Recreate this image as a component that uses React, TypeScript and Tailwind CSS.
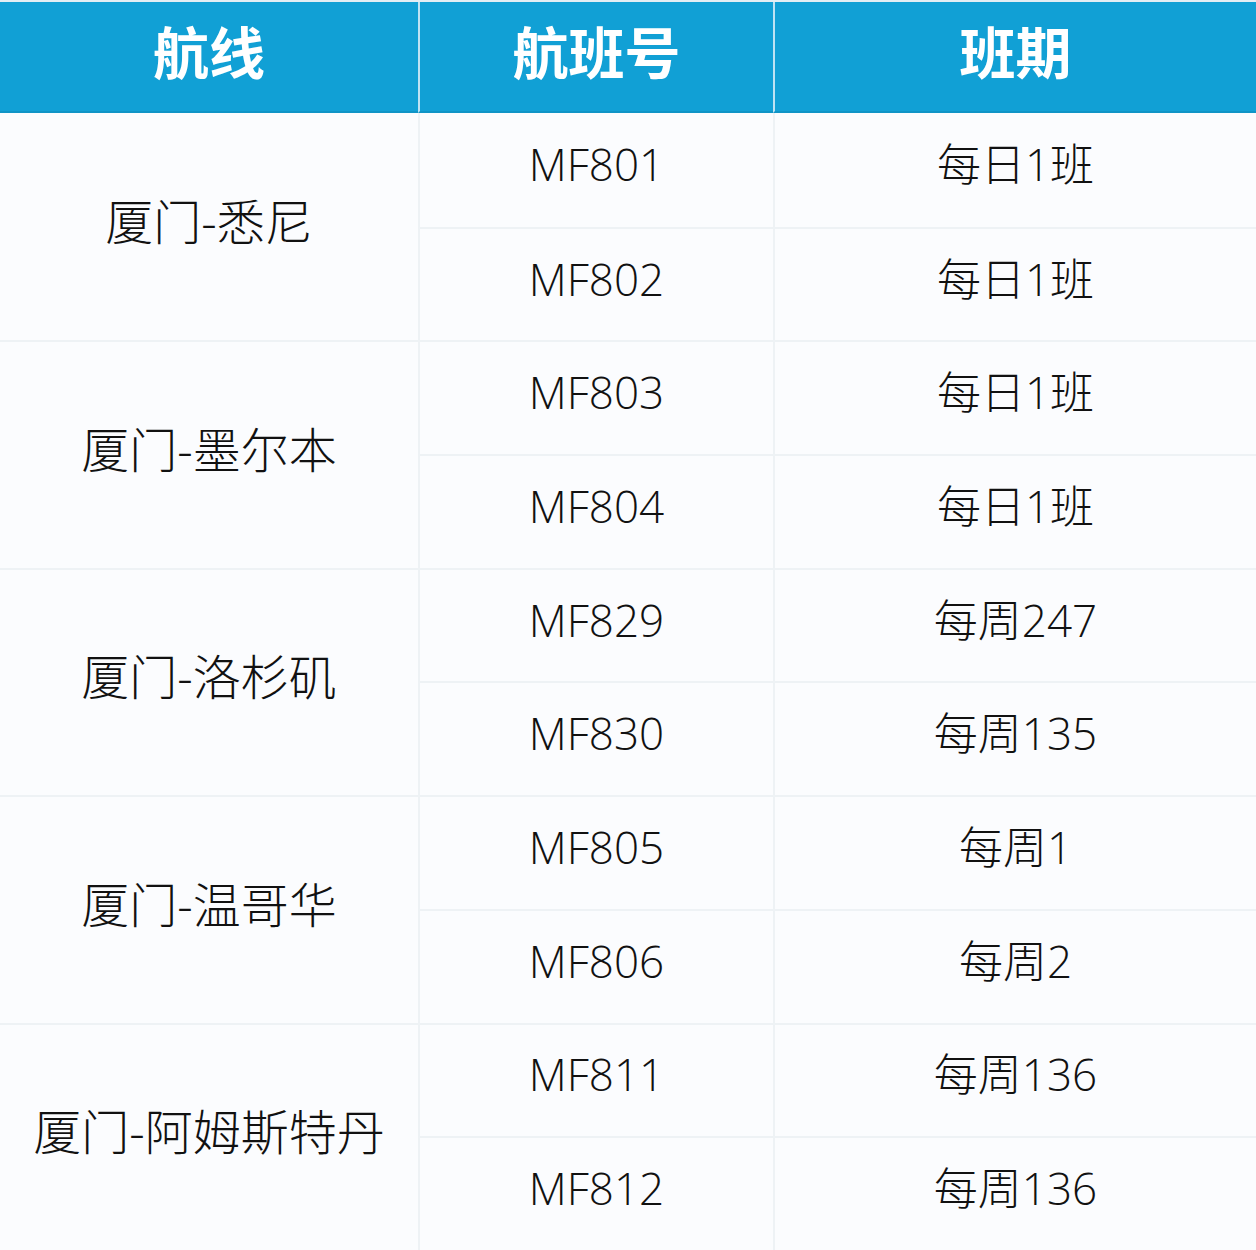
const rows = [
  { route: '厦门-悉尼', flights: [['MF801', '每日1班'], ['MF802', '每日1班']] },
  { route: '厦门-墨尔本', flights: [['MF803', '每日1班'], ['MF804', '每日1班']] },
  { route: '厦门-洛杉矶', flights: [['MF829', '每周247'], ['MF830', '每周135']] },
  { route: '厦门-温哥华', flights: [['MF805', '每周1'], ['MF806', '每周2']] },
  { route: '厦门-阿姆斯特丹', flights: [['MF811', '每周136'], ['MF812', '每周136']] },
];

const font = { fontFamily: '"Open Sans", "Noto Sans CJK SC", sans-serif' };

export default function App() {
  return (
    <div className="w-[1256px] h-[1250px] bg-[#fbfcfe] border-t-2 border-[#e3eef4]" style={font}>
      <div className="grid grid-cols-[418px_355px_483px] grid-rows-[111px_repeat(10,113.7px)]">
        {['航线', '航班号', '班期'].map((h, i) => (
          <div
            key={h}
            className={`flex items-center justify-center pb-[10px] bg-[#11a0d5] text-white text-[56px] font-bold border-b-2 border-[#0f94c6] ${i > 0 ? 'border-l-2 border-l-[#bfe3f3]' : ''}`}
          >
            {h}
          </div>
        ))}
        {rows.map((r, ri) => (
          <>
            <div
              key={r.route}
              className={`row-span-2 flex items-center justify-center pb-[10px] text-[48px] font-light text-[#111] ${ri > 0 ? 'border-t-2 border-[#eef2f5]' : ''}`}
            >
              {r.route}
            </div>
            {r.flights.map(([no, sched], fi) => (
              <>
                <div
                  key={no}
                  className={`flex items-center justify-center pb-[12px] text-[44px] font-light text-[#111] border-l-2 border-[#eef2f5] ${ri > 0 || fi > 0 ? 'border-t-2' : ''}`}
                >
                  {no}
                </div>
                <div
                  key={no + 's'}
                  className={`flex items-center justify-center pb-[12px] text-[44px] font-light text-[#111] border-l-2 border-[#eef2f5] ${ri > 0 || fi > 0 ? 'border-t-2' : ''}`}
                >
                  {sched}
                </div>
              </>
            ))}
          </>
        ))}
      </div>
    </div>
  );
}
